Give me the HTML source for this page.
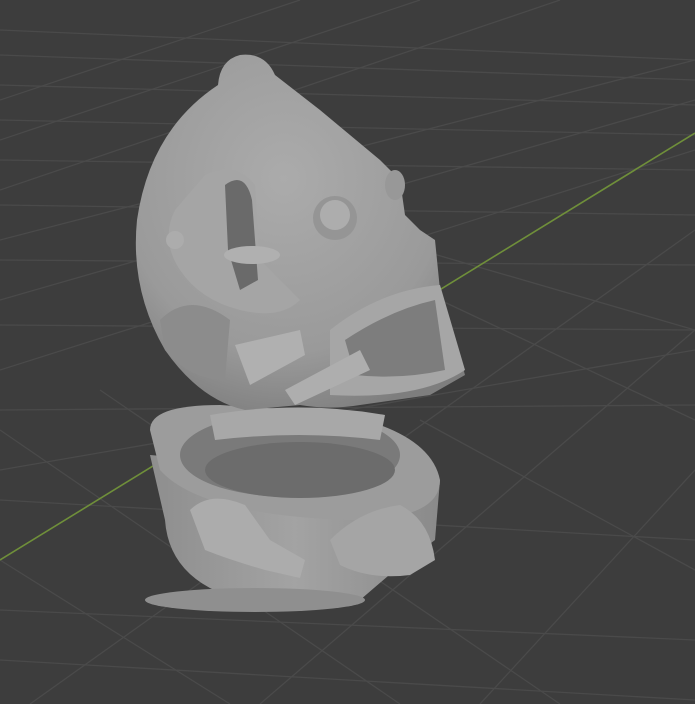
<!DOCTYPE html>
<html><head><meta charset="utf-8"><style>
html,body{margin:0;padding:0;background:#3d3d3d;overflow:hidden}
svg{display:block}
</style></head><body>
<svg width="695" height="704" viewBox="0 0 695 704" xmlns="http://www.w3.org/2000/svg">
<defs>
<radialGradient id="head" cx="0.45" cy="0.35" r="0.7">
<stop offset="0" stop-color="#ababab"/><stop offset="0.7" stop-color="#9a9a9a"/><stop offset="1" stop-color="#7e7e7e"/>
</radialGradient>
<linearGradient id="base" x1="0" y1="0" x2="1" y2="0">
<stop offset="0" stop-color="#8e8e8e"/><stop offset="0.5" stop-color="#a3a3a3"/><stop offset="1" stop-color="#8a8a8a"/>
</linearGradient>
</defs>
<rect width="695" height="704" fill="#3d3d3d"/>
<g stroke="#4a4a4a" stroke-width="1.3" fill="none">
<!-- roughly horizontal receding lines -->
<path d="M0 30 L695 60"/><path d="M0 55 L695 80"/><path d="M0 85 L695 105"/>
<path d="M0 120 L695 135"/><path d="M0 160 L695 170"/><path d="M0 205 L695 215"/>
<path d="M0 260 L695 265"/><path d="M0 325 L695 330"/><path d="M0 410 L695 405"/>
<path d="M0 500 L695 540"/><path d="M0 610 L695 640"/>
<!-- diagonal lines -->
<path d="M0 240 L695 60"/><path d="M0 300 L695 100"/><path d="M0 370 L695 150"/>
<path d="M0 190 L560 0"/><path d="M0 140 L420 0"/><path d="M0 100 L300 0"/>
<path d="M30 704 L695 230"/><path d="M260 704 L695 330"/><path d="M480 704 L695 470"/>
<path d="M0 470 L695 350"/><path d="M0 660 L695 700"/>
<path d="M0 430 L400 704"/><path d="M100 390 L560 704"/><path d="M0 560 L230 704"/>
<path d="M440 300 L695 420"/><path d="M420 420 L695 570"/><path d="M420 250 L695 330"/>
</g>
<path d="M0 560 L695 133" stroke="#6f8f3a" stroke-width="1.6"/>
<!-- base -->
<path d="M165 520 Q170 590 265 605 Q350 612 360 600 L395 570 L435 540 L440 480 L150 455 Z" fill="url(#base)"/>
<ellipse cx="255" cy="600" rx="110" ry="12" fill="#8f8f8f"/>
<path d="M150 430 Q150 405 220 405 L330 412 Q430 430 440 480 Q440 520 350 520 Q200 515 160 470 Z" fill="#9c9c9c"/>
<ellipse cx="290" cy="455" rx="110" ry="42" fill="#7a7a7a"/>
<ellipse cx="300" cy="470" rx="95" ry="28" fill="#6c6c6c"/>
<path d="M210 415 Q300 400 385 415 L380 440 Q300 430 215 440 Z" fill="#a8a8a8"/>
<path d="M190 510 Q210 490 245 505 L270 540 L305 560 L300 578 L265 570 Q230 560 205 550 Z" fill="#acacac"/>
<path d="M330 540 Q360 510 400 505 Q430 520 435 560 L410 575 Q370 580 340 565 Z" fill="#a5a5a5"/>
<!-- head -->
<path d="M240 55 Q220 60 218 85 Q150 130 137 220 Q130 290 165 350 Q200 400 245 410 L300 405 Q330 410 360 405 L430 395 L465 375 L450 320 L440 290 L435 240 L420 230 L405 215 L400 180 L380 160 L320 110 L275 75 Q265 52 240 55 Z" fill="url(#head)"/>
<path d="M160 320 Q190 290 230 320 L225 380 Q190 380 165 350 Z" fill="#8c8c8c"/>
<path d="M205 175 Q235 160 255 185 L260 260 L300 300 Q280 320 240 310 Q200 300 180 270 Q160 240 175 210 Z" fill="#a5a5a5"/>
<path d="M225 185 Q245 170 252 200 L258 280 L240 290 L228 250 Z" fill="#6a6a6a"/>
<ellipse cx="252" cy="255" rx="28" ry="9" fill="#b0b0b0"/>
<circle cx="335" cy="218" r="22" fill="#959595"/><circle cx="335" cy="215" r="15" fill="#adadad"/>
<ellipse cx="395" cy="185" rx="10" ry="15" fill="#989898"/>
<path d="M330 330 Q380 290 440 285 L465 370 Q420 400 330 395 Z" fill="#a6a6a6"/>
<path d="M345 340 Q390 310 435 300 L445 370 Q400 380 355 375 Z" fill="#7d7d7d"/>
<path d="M235 345 L300 330 L305 355 L250 385 Z" fill="#b0b0b0"/>
<path d="M285 390 L360 350 L370 370 L295 405 Z" fill="#aeaeae"/>
<circle cx="175" cy="240" r="9" fill="#acacac"/>
</svg>
</body></html>
